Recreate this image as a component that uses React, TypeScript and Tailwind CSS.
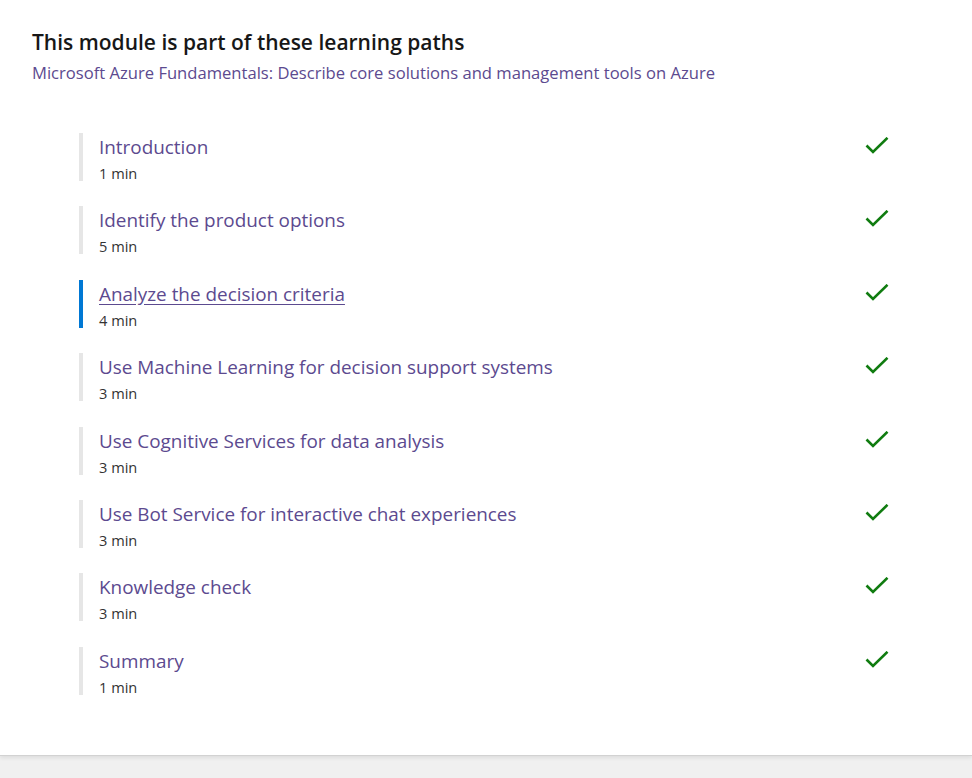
import React from "react";

const items = [
  { t: "Introduction", m: "1 min" },
  { t: "Identify the product options", m: "5 min" },
  { t: "Analyze the decision criteria", m: "4 min", active: true },
  { t: "Use Machine Learning for decision support systems", m: "3 min" },
  { t: "Use Cognitive Services for data analysis", m: "3 min" },
  { t: "Use Bot Service for interactive chat experiences", m: "3 min" },
  { t: "Knowledge check", m: "3 min" },
  { t: "Summary", m: "1 min" },
];

function Check() {
  return (
    <svg width="24" height="18" viewBox="0 0 24 18" className="block">
      <path d="M1.5 8.5 L8 15 L22.5 0.8" fill="none" stroke="#107c10" strokeWidth="2.6" />
    </svg>
  );
}

export default function App() {
  return (
    <div className="min-h-[778px] bg-[#f0f0f0]" style={{ fontFamily: '"Segoe UI", "Open Sans", sans-serif' }}>
      <div className="bg-white h-[756px] border-b border-[#d2d2d2] shadow-[0_2px_4px_rgba(0,0,0,0.08)] pt-[27px]">
        <div className="px-8">
          <h2 className="text-[21px] leading-[30px] font-semibold text-[#171717]">This module is part of these learning paths</h2>
          <p className="mt-[4px] text-[16.6px] leading-[24px] text-[#5c4a8f]">
            Microsoft Azure Fundamentals: Describe core solutions and management tools on Azure
          </p>
        </div>
        <ul className="mt-[48px] pl-[79px] pr-[83px] flex flex-col gap-[25.4px]">
          {items.map((it) => (
            <li key={it.t} className="flex items-start justify-between">
              <div className={`border-l-4 ${it.active ? "border-[#0078d4]" : "border-[#e6e6e6]"} pl-4 h-[48px]`}>
                <div className={`text-[18.9px] leading-[28px] text-[#5c4a8f] ${it.active ? "underline underline-offset-[3px]" : ""}`}>{it.t}</div>
                <div className="mt-[2px] text-[14.6px] leading-[20px] text-[#333]">{it.m}</div>
              </div>
              <div className="mt-[4px]">
                <Check />
              </div>
            </li>
          ))}
        </ul>
      </div>
    </div>
  );
}
